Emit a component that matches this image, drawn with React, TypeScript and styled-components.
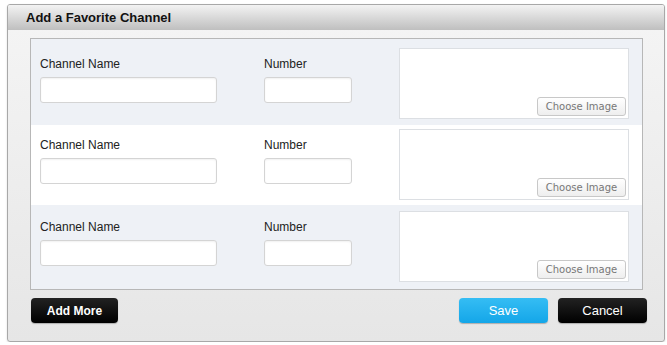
import React from 'react'
import styled, { createGlobalStyle } from 'styled-components'

const GlobalStyle = createGlobalStyle`
    body {
        margin: 0;
        background: #fff;
        font-family: 'Liberation Sans', Arial, sans-serif;
    }
`

const Page = styled.div`
    padding: 4px 0 0 7px;
`

const Dialog = styled.div`
    box-sizing: border-box;
    width: 658px;
    height: 338px;
    border: 1px solid #a8a8a8;
    border-radius: 3px;
    background: linear-gradient(#f5f5f5, #e6e6e6);
    box-shadow: 0 1px 2px rgba(0, 0, 0, 0.15);
    overflow: hidden;
`

const TitleBar = styled.div`
    height: 25px;
    line-height: 25px;
    padding-left: 18px;
    font-size: 13px;
    font-weight: bold;
    color: #111;
    background: linear-gradient(#f3f3f3, #bfbfbf);
`

const Body = styled.div`
    padding: 8px 21px 0 22px;
`

const Panel = styled.div`
    box-sizing: border-box;
    height: 252px;
    border: 1px solid #b7b7b7;
    background: #fff;
    display: flex;
    flex-direction: column;
`

const Row = styled.div<{ $striped: boolean; $top: number; $h: number }>`
    box-sizing: border-box;
    height: ${(p) => p.$h}px;
    flex-shrink: 0;
    display: flex;
    padding: ${(p) => p.$top}px 13px 0 9px;
    background: ${(p) => (p.$striped ? '#eef1f6' : '#fff')};
`

const Field = styled.div<{ $w: number }>`
    width: ${(p) => p.$w}px;
    margin-right: 47px;
    padding-top: 9px;
`

const Label = styled.div`
    font-size: 12px;
    line-height: 14px;
    color: #222;
    margin-bottom: 6px;
`

const Input = styled.input`
    box-sizing: border-box;
    display: block;
    width: 100%;
    height: 26px;
    border: 1px solid #d4d4d4;
    border-radius: 3px;
    background: #fff;
    box-shadow: inset 0 1px 2px rgba(0, 0, 0, 0.06);
    outline: none;
`

const ImageBox = styled.div`
    box-sizing: border-box;
    width: 230px;
    height: 71px;
    margin-left: auto;
    border: 1px solid #dcdfe3;
    background: #fff;
    display: flex;
    align-items: flex-end;
    justify-content: flex-end;
    padding: 0 2px 2px 0;
`

const ChooseButton = styled.button`
    box-sizing: border-box;
    width: 89px;
    height: 19px;
    padding: 0;
    border: 1px solid #c8c8c8;
    border-radius: 3px;
    background: linear-gradient(#ffffff, #eeeeee);
    font-family: 'DejaVu Sans', Verdana, sans-serif;
    font-size: 10px;
    color: #777;
`

const Footer = styled.div`
    display: flex;
    align-items: center;
    margin: 8px -4px 0 1px;
`

const Button = styled.button<{ $blue?: boolean; $bold?: boolean }>`
    box-sizing: border-box;
    width: ${(p) => (p.$bold ? 87 : 89)}px;
    height: 25px;
    padding: 0;
    border: none;
    border-radius: 4px;
    color: #fff;
    font-family: 'Liberation Sans', Arial, sans-serif;
    font-size: ${(p) => (p.$bold ? 12 : 13)}px;
    font-weight: ${(p) => (p.$bold ? 'bold' : 'normal')};
    background: ${(p) =>
        p.$blue
            ? 'linear-gradient(#35bdf4, #14a6e8)'
            : 'linear-gradient(#222, #000)'};
    box-shadow: 0 1px 1px rgba(0, 0, 0, 0.25);
`

const Spacer = styled.div`
    flex: 1;
`

const Gap = styled.div`
    width: 10px;
`

const rows = [
    { top: 9, h: 86, striped: true },
    { top: 4, h: 80, striped: false },
    { top: 6, h: 84, striped: true },
]

const App: React.FC = () => {
    return (
        <>
            <GlobalStyle />
            <Page>
                <Dialog>
                    <TitleBar>Add a Favorite Channel</TitleBar>
                    <Body>
                        <Panel>
                            {rows.map((r, i) => (
                                <Row key={i} $striped={r.striped} $top={r.top} $h={r.h}>
                                    <Field $w={177}>
                                        <Label>Channel Name</Label>
                                        <Input />
                                    </Field>
                                    <Field $w={88}>
                                        <Label>Number</Label>
                                        <Input />
                                    </Field>
                                    <ImageBox>
                                        <ChooseButton>Choose Image</ChooseButton>
                                    </ImageBox>
                                </Row>
                            ))}
                        </Panel>
                        <Footer>
                            <Button $bold>Add More</Button>
                            <Spacer />
                            <Button $blue>Save</Button>
                            <Gap />
                            <Button>Cancel</Button>
                        </Footer>
                    </Body>
                </Dialog>
            </Page>
        </>
    )
}

export default App
